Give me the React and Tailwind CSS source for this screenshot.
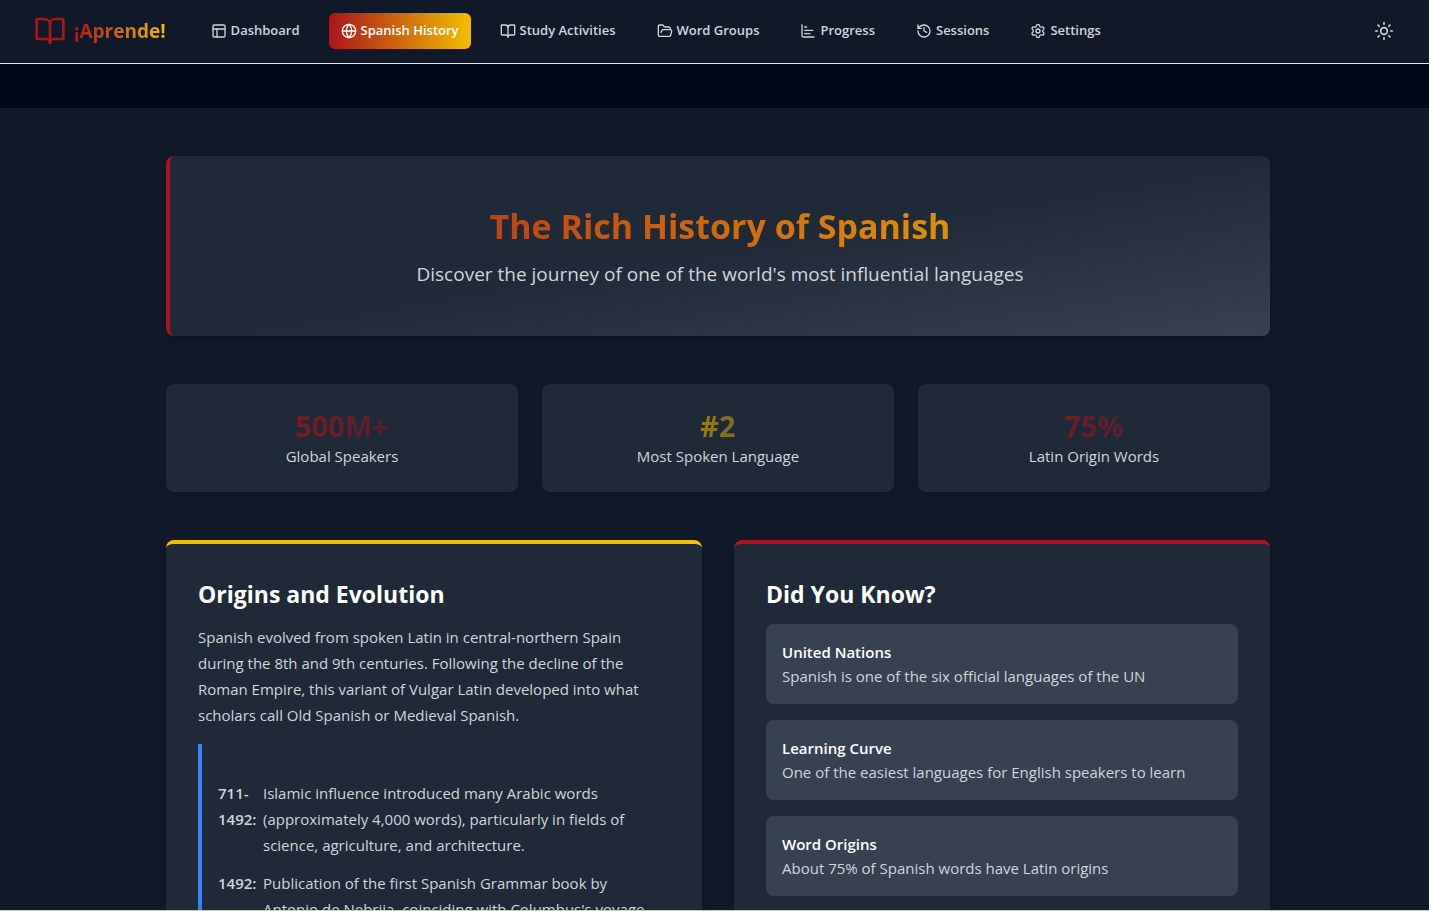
import { BookOpen, ChartBar, FolderOpen, Globe, History, PanelsTopLeft, Settings, Sun } from "lucide-react";

const navItems = [
  { label: "Dashboard", icon: PanelsTopLeft },
  { label: "Spanish History", icon: Globe, active: true },
  { label: "Study Activities", icon: BookOpen },
  { label: "Word Groups", icon: FolderOpen },
  { label: "Progress", icon: ChartBar },
  { label: "Sessions", icon: History },
  { label: "Settings", icon: Settings },
];

const stats = [
  { value: "500M+", label: "Global Speakers", color: "from-[#aa151b]" },
  { value: "#2", label: "Most Spoken Language", color: "from-[#f1bf00]" },
  { value: "75%", label: "Latin Origin Words", color: "from-[#aa151b]" },
];

const timeline = [
  {
    year: "711-1492:",
    text: "Islamic influence introduced many Arabic words (approximately 4,000 words), particularly in fields of science, agriculture, and architecture.",
  },
  {
    year: "1492:",
    text: "Publication of the first Spanish Grammar book by Antonio de Nebrija, coinciding with Columbus's voyage",
  },
];

const facts = [
  { title: "United Nations", text: "Spanish is one of the six official languages of the UN" },
  { title: "Learning Curve", text: "One of the easiest languages for English speakers to learn" },
  { title: "Word Origins", text: "About 75% of Spanish words have Latin origins" },
];

function NavLink({ label, icon: Icon, active }) {
  const tone = active
    ? "bg-linear-to-r/srgb from-[#aa151b] to-[#f1bf00] text-white"
    : "text-[#d1d5db]";
  return (
    <a
      href="#"
      aria-current={active ? "page" : undefined}
      className={`flex h-9 items-center gap-1 whitespace-nowrap rounded-md px-3 text-[13px] font-semibold ${tone}`}
    >
      <Icon className="size-4 shrink-0" />
      {label}
    </a>
  );
}

function Header() {
  return (
    <header className="flex h-16 shrink-0 items-center border-b border-[#e5e7eb] bg-[#111827] pr-[25px] pb-px pl-[34px]">
      <a href="#" className="mr-[33px] flex items-center gap-2">
        <BookOpen className="size-8 text-[#aa151b]" />
        <span className="bg-linear-to-r/srgb from-[#aa151b] to-[#f1bf00] bg-clip-text text-[19px] leading-8 font-bold text-transparent">
          ¡Aprende!
        </span>
      </a>
      <nav className="flex gap-[17px]">
        {navItems.map((item) => (
          <NavLink key={item.label} {...item} />
        ))}
      </nav>
      <button type="button" aria-label="Toggle theme" className="ml-auto flex size-10 items-center justify-center rounded-md text-[#d1d5db]">
        <Sun className="size-5" />
      </button>
    </header>
  );
}

export default function App() {
  return (
    <div className="flex h-screen flex-col border-b border-[#c3cbbf] bg-[#020817] font-['Open_Sans','Noto_Sans',sans-serif] text-[#d1d5db]">
      <Header />
      <main className="mt-11 min-h-0 flex-1 overflow-y-auto bg-[#111827] py-12 pl-[7px] [scrollbar-width:none]">
        <div className="mx-auto max-w-6xl px-6">
          <section className="mb-12 rounded-lg border-l-4 border-[#aa151b] bg-linear-to-br/srgb from-[#1f2937] via-[#1f2937] to-[#374151] p-12 text-center shadow-md">
            <h1 className="mb-3 bg-linear-to-r/srgb from-[#aa151b] to-[#f1bf00] bg-clip-text text-[34px] leading-[44px] font-bold text-transparent">
              The Rich History of Spanish
            </h1>
            <p className="text-[19px] leading-7">Discover the journey of one of the world's most influential languages</p>
          </section>

          <section className="mb-12 grid grid-cols-3 gap-6">
            {stats.map((stat) => (
              <div key={stat.label} className="rounded-lg bg-[#1f2937] p-6 text-center shadow-sm">
                <div className={`bg-linear-to-r/srgb ${stat.color} to-transparent bg-clip-text text-[29px] leading-9 font-bold text-transparent`}>
                  {stat.value}
                </div>
                <div className="text-[15px] leading-6">{stat.label}</div>
              </div>
            ))}
          </section>

          <div className="grid grid-cols-2 gap-8">
            <section className="rounded-lg border-t-4 border-[#f1bf00] bg-[#1f2937] p-8 shadow-md">
              <h2 className="mb-3 text-[23px] leading-9 font-bold text-white">Origins and Evolution</h2>
              <p className="mb-4 text-[15px] leading-[26px]">
                Spanish evolved from spoken Latin in central-northern Spain during the 8th and 9th centuries. Following
                the decline of the Roman Empire, this variant of Vulgar Latin developed into what scholars call Old
                Spanish or Medieval Spanish.
              </p>
              <ul className="space-y-3 border-l-4 border-[#3b82f6] pt-9 pr-2 pl-4 text-[15px] leading-[26px]">
                {timeline.map((entry) => (
                  <li key={entry.year} className="flex gap-2">
                    <strong className="w-[37px] shrink-0 font-semibold">{entry.year}</strong>
                    <span>{entry.text}</span>
                  </li>
                ))}
              </ul>
            </section>

            <section className="rounded-lg border-t-4 border-[#aa151b] bg-[#1f2937] p-8 shadow-md">
              <h2 className="mb-3 text-[23px] leading-9 font-bold text-white">Did You Know?</h2>
              <div className="flex flex-col gap-4">
                {facts.map((fact) => (
                  <div key={fact.title} className="rounded-lg bg-[#374151] p-4 text-[15px] leading-6">
                    <h3 className="font-semibold text-white">{fact.title}</h3>
                    <p>{fact.text}</p>
                  </div>
                ))}
              </div>
            </section>
          </div>
        </div>
      </main>
    </div>
  );
}
